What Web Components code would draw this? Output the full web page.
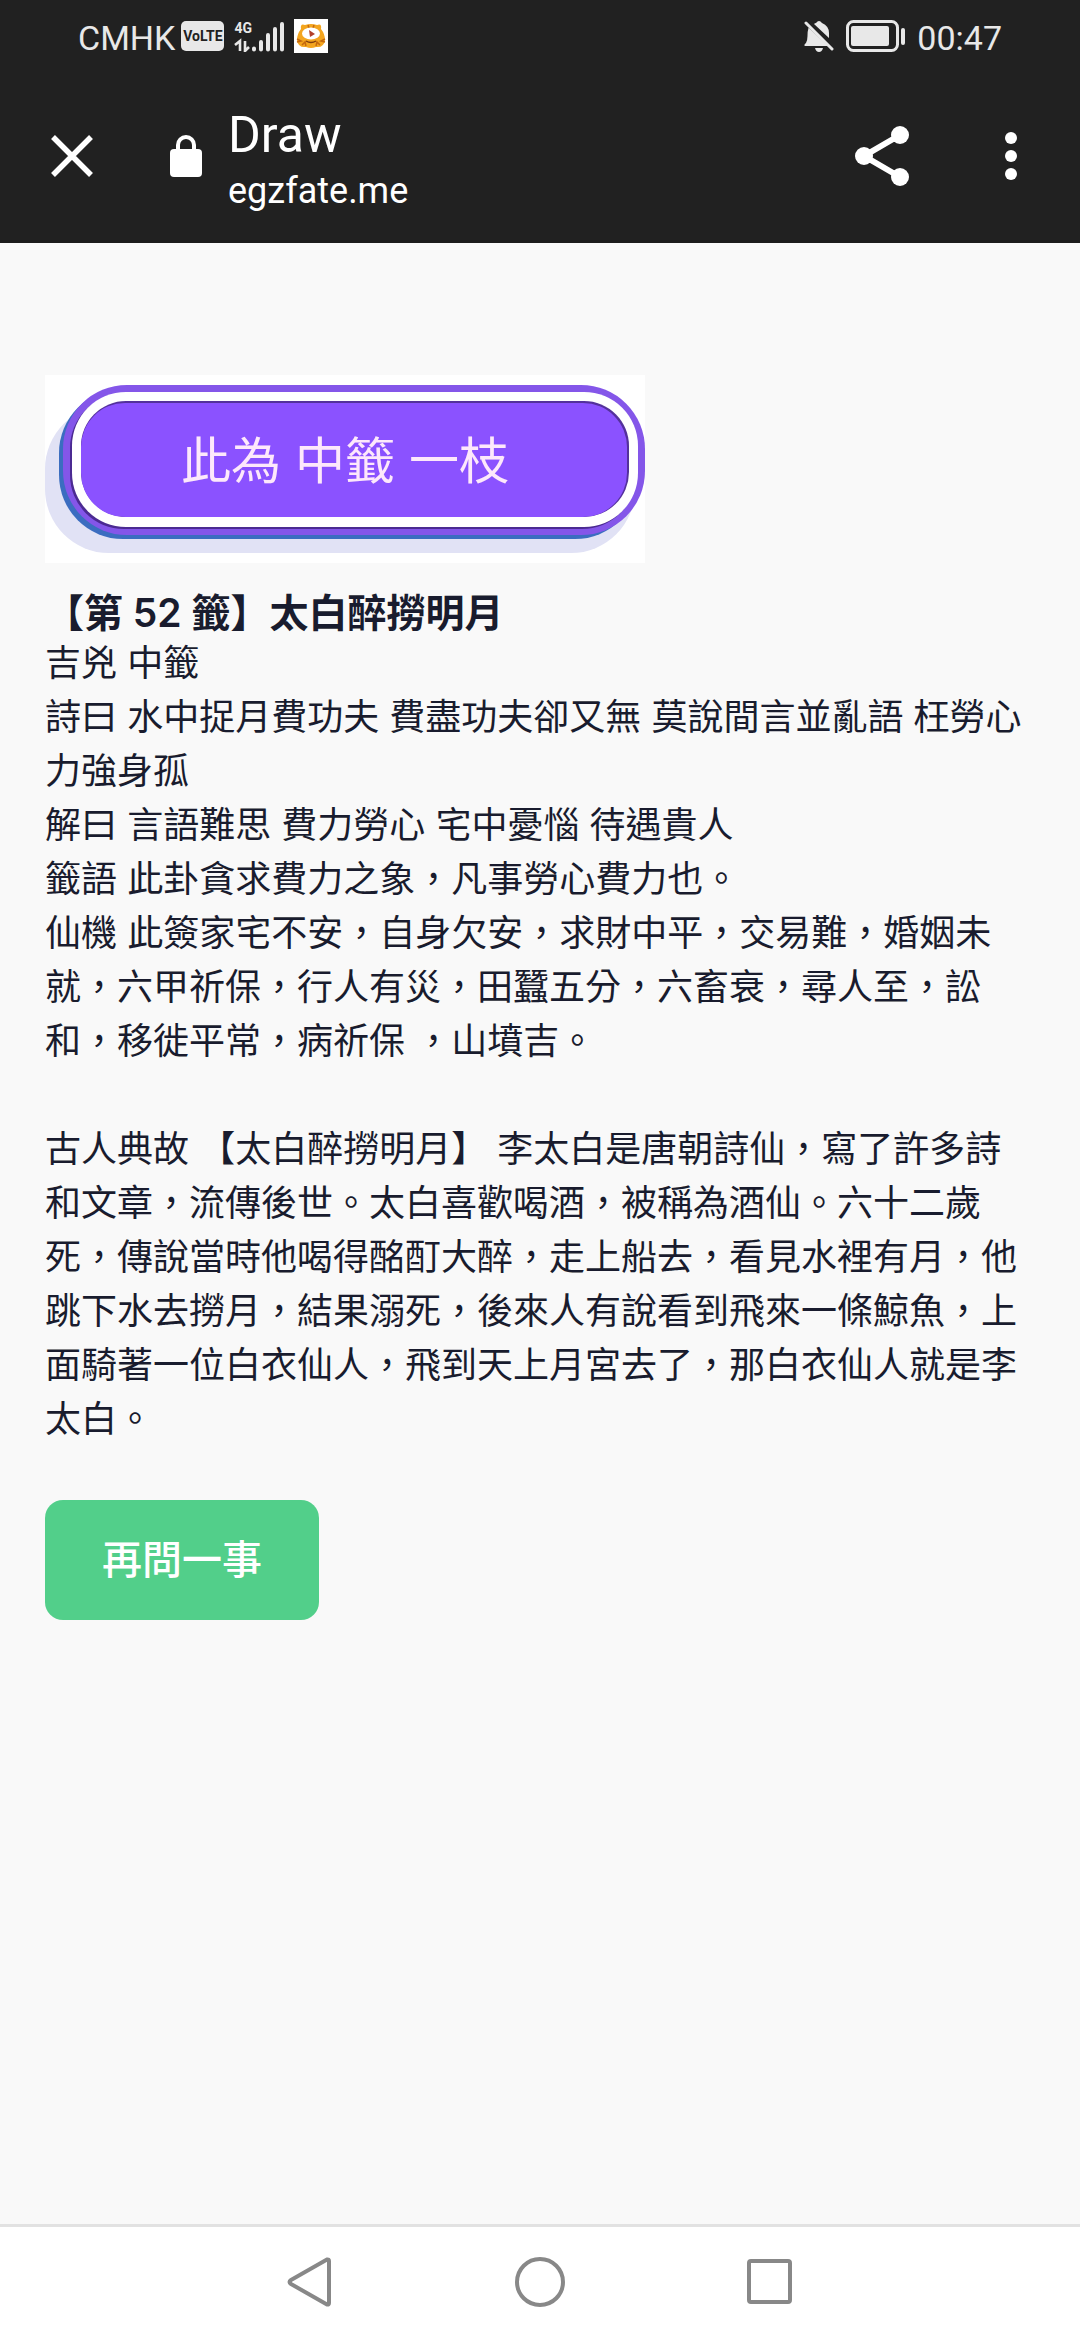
<!DOCTYPE html>
<html lang="zh-Hant">
<head>
<meta charset="utf-8">
<meta name="viewport" content="width=device-width, initial-scale=1">
<title>Draw</title>
<style>
    body {
        margin: 0;
        font-family: Inter, "Noto Sans CJK TC", sans-serif;
        color: #191c2e;
        background-color: #f9f9f9;
        --bar-color: #212121;
        --bar-font: Roboto, "Noto Sans", sans-serif;
        --page-padding: 45px;
    }
</style>
</head>
<body>
<fate-screen>
    <status-bar slot="top" carrier="CMHK" time="00:47"></status-bar>
    <browser-bar slot="top" page="Draw" host="egzfate.me"></browser-bar>

    <result-banner>此為 中籤 一枝</result-banner>
    <fortune-text>
        <span slot="title">【第 52 籤】太白醉撈明月</span>
        <p>吉兇 中籤</p>
        <p>詩曰 水中捉月費功夫 費盡功夫卻又無 莫說間言並亂語 枉勞心力強身孤</p>
        <p>解曰 言語難思 費力勞心 宅中憂惱 待遇貴人</p>
        <p>籤語 此卦貪求費力之象，凡事勞心費力也。</p>
        <p>仙機 此簽家宅不安，自身欠安，求財中平，交易難，婚姻未就，六甲祈保，行人有災，田蠶五分，六畜衰，尋人至，訟和，移徙平常，病祈保 ，山墳吉。</p>
        <p slot="story">古人典故 【太白醉撈明月】 李太白是唐朝詩仙，寫了許多詩和文章，流傳後世。太白喜歡喝酒，被稱為酒仙。六十二歲死，傳說當時他喝得酩酊大醉，走上船去，看見水裡有月，他跳下水去撈月，結果溺死，後來人有說看到飛來一條鯨魚，上面騎著一位白衣仙人，飛到天上月宮去了，那白衣仙人就是李太白。</p>
    </fortune-text>
    <action-button>再問一事</action-button>

    <nav-bar slot="bottom"></nav-bar>
</fate-screen>

<script>
function makeTemplate( html ) {
    const template = document.createElement('template');
    template.innerHTML = html;
    return template;
}

class BaseElement extends HTMLElement {
    constructor(){
        super();

        this.attachShadow( { mode:"open" } );
        this.shadowRoot.appendChild( this.constructor.template.content.cloneNode( true ) );
    }

    setText( selector, text ) {
        this.shadowRoot.querySelector( selector ).textContent = text;
    }
}

class FateScreen extends BaseElement {
    static template = makeTemplate(`
        <style>
            :host {
                display: flex;
                flex-direction: column;
                min-height: 100vh;
            }

            main {
                flex: 1;
                display: flex;
                flex-direction: column;
                align-items: flex-start;
                padding: 132px var( --page-padding ) 54px;
            }
        </style>
        <header><slot name="top"></slot></header>
        <main><slot></slot></main>
        <footer><slot name="bottom"></slot></footer>
    `);
}

class StatusBar extends BaseElement {
    static template = makeTemplate(`
        <style>
            :host {
                display: flex;
                justify-content: space-between;
                align-items: center;
                height: 72px;
                padding: 0 78px;
                color: #e8e8e8;
                background-color: var( --bar-color );
                font: 34px/40px var( --bar-font );
            }

            .group {
                display: flex;
                align-items: center;
            }

            .carrier, time {
                padding-top: 4px;
            }

            .volte {
                width: 43px;
                margin: 0 10px 0 6px;
                border-radius: 5px;
                background-color: #e8e8e8;
                color: var( --bar-color );
                font-size: 14px;
                font-weight: 700;
                line-height: 30px;
                text-align: center;
            }

            .signal {
                display: grid;
                margin-right: 10px;
            }

            .signal > * {
                grid-area: 1 / 1;
            }

            .net {
                font-size: 14px;
                font-weight: 700;
                line-height: 16px;
            }

            svg {
                display: block;
            }

            .bell {
                margin-right: 12px;
            }

            .battery {
                margin-right: 11px;
            }
        </style>
        <div class="group">
            <span class="carrier"></span>
            <span class="volte">VoLTE</span>
            <div class="signal">
                <span class="net">4G</span>
                <svg width="50" height="32" viewBox="0 0 50 32" fill="none" stroke="#e8e8e8" aria-hidden="true">
                    <path d="M1 25l5-4v10M11 21v10l4-4" stroke-width="2.6"/>
                    <path d="M20 28.500v1M27 22v7.500M34 15v14.500M41 9v20.500M48 4v25.500" stroke-width="4" stroke-linecap="round"/>
                </svg>
            </div>
            <svg width="34" height="34" viewBox="0 0 34 34" aria-hidden="true">
                <rect width="34" height="34" fill="#fff"/>
                <path d="M7 10Q6 4 11 6Q17 4 23 6Q28 4 27 10Q31 15 31 21Q30 29 22 28Q17 30 12 28Q4 29 3 21Q3 15 7 10Z" fill="#f3a51f"/>
                <path d="M3 20l4 2-4 1M31 20l-4 2 4 1M8 26l3-3 1 4M26 26l-3-3-1 4M14 6l1 3M20 6l-1 3" stroke="#c4680e" stroke-width="1.500" fill="none"/>
                <ellipse cx="17" cy="14.500" rx="9" ry="6" fill="#fff"/>
                <path d="M15 11l6 4-5 3z" fill="#b3402a"/>
                <path d="M12 22q5 3 10 0" stroke="#7d3c10" stroke-width="1.300" fill="none"/>
            </svg>
        </div>
        <div class="group">
            <svg class="bell" width="30" height="34" viewBox="0 0 30 34" fill="#e8e8e8" aria-hidden="true">
                <path d="M4.500 9Q3.500 12 3.500 17Q3.500 21 2 24Q0 25 .5 27H24L5 9Z"/>
                <path d="M10 5Q11 4 12 4Q15 0 18 4Q25 7 25 14V19Z"/>
                <path d="M11 29h8q-1 4-4 4t-4-4z"/>
                <path d="M2 4L28 30" stroke="#e8e8e8" stroke-width="3" stroke-linecap="round"/>
            </svg>
            <svg class="battery" width="60" height="34" viewBox="0 0 60 34" aria-hidden="true">
                <rect x="1.500" y="2.500" width="50" height="29" rx="6" fill="none" stroke="#e8e8e8" stroke-width="3"/>
                <rect x="5" y="7" width="38" height="20" rx="2" fill="#e8e8e8"/>
                <rect x="55" y="9" width="4" height="17" rx="2" fill="#e8e8e8"/>
            </svg>
            <time></time>
        </div>
    `);

    connectedCallback() {
        this.setText( '.carrier', this.getAttribute('carrier') );
        this.setText( 'time', this.getAttribute('time') );
    }
}

class BrowserBar extends BaseElement {
    static template = makeTemplate(`
        <style>
            :host {
                display: flex;
                align-items: center;
                height: 168px;
                border-bottom: 3px solid #1c1c1c;
                color: white;
                background-color: var( --bar-color );
                font-family: var( --bar-font );
            }

            button {
                display: grid;
                place-items: center;
                width: 120px;
                height: 120px;
                padding: 0;
                border: none;
                background-color: transparent;
            }

            .close {
                width: 144px;
            }

            .menu {
                width: 138px;
            }

            .lock {
                margin: 0 26px;
            }

            .address {
                flex: 1;
                padding-top: 14px;
            }

            .page {
                font-size: 50px;
                line-height: 56px;
            }

            .host {
                font-size: 36px;
                line-height: 56px;
            }
        </style>
        <button class="close" type="button" aria-label="Close">
            <svg width="42" height="42" viewBox="0 0 42 42" stroke="white" stroke-width="5.500"><path d="M2 2L40 40M40 2L2 40"/></svg>
        </button>
        <svg class="lock" width="32" height="44" viewBox="0 0 32 44" aria-hidden="true">
            <rect y="15" width="32" height="28" rx="4" fill="white"/>
            <path d="M8 16V11a8 8 0 0 1 16 0v5" fill="none" stroke="white" stroke-width="4"/>
        </svg>
        <div class="address">
            <div class="page"></div>
            <div class="host"></div>
        </div>
        <button type="button" aria-label="Share">
            <svg width="54" height="60" viewBox="0 0 54 60" fill="white">
                <path d="M45 9L9 30L45 51" fill="none" stroke="white" stroke-width="6"/>
                <circle cx="45" cy="9" r="9"/><circle cx="9" cy="30" r="9"/><circle cx="45" cy="51" r="9"/>
            </svg>
        </button>
        <button class="menu" type="button" aria-label="More">
            <svg width="12" height="48" viewBox="0 0 12 48" fill="white"><circle cx="6" cy="6" r="6"/><circle cx="6" cy="24" r="6"/><circle cx="6" cy="42" r="6"/></svg>
        </button>
    `);

    connectedCallback() {
        this.setText( '.page', this.getAttribute('page') );
        this.setText( '.host', this.getAttribute('host') );
    }
}

class ResultBanner extends BaseElement {
    static template = makeTemplate(`
        <style>
            :host {
                display: grid;
                max-width: 100%;
                background-color: white;
            }

            svg, .label {
                grid-area: 1 / 1;
            }

            svg {
                display: block;
                max-width: 100%;
            }

            .label {
                place-self: center;
                padding-bottom: 16px;
                color: #fde8fb;
                font-size: 50px;
                font-weight: 400;
                line-height: 60px;
            }
        </style>
        <svg width="600" height="188" viewBox="0 0 600 188" aria-hidden="true">
            <rect x="0" y="30" width="590" height="148" rx="64" fill="#e1e2f5"/>
            <rect x="14" y="14" width="580" height="150" rx="64" fill="#3b6dc0"/>
            <rect x="18" y="10" width="582" height="150" rx="64" fill="#8456e9"/>
            <rect x="25" y="19" width="566" height="135" rx="54" fill="#4b2a92"/>
            <rect x="27" y="17" width="566" height="135" rx="54" fill="#fff"/>
            <rect x="36" y="26" width="548" height="116" rx="45" fill="#54319c"/>
            <rect x="36" y="28" width="546" height="114" rx="44" fill="#8b52ff"/>
        </svg>
        <span class="label"><slot></slot></span>
    `);
}

class FortuneText extends BaseElement {
    static template = makeTemplate(`
        <style>
            :host {
                display: block;
                margin-top: 27px;
                font-size: 36px;
                line-height: 54px;
            }

            h1 {
                margin: 0;
                font-size: 39px;
                font-weight: 600;
                line-height: 46px;
            }

            ::slotted( p ) {
                margin: 0;
            }

            .story {
                margin-top: 54px;
            }
        </style>
        <h1><slot name="title"></slot></h1>
        <slot></slot>
        <div class="story"><slot name="story"></slot></div>
    `);
}

class ActionButton extends BaseElement {
    static template = makeTemplate(`
        <style>
            :host {
                display: block;
                margin-top: 54px;
            }

            button {
                padding: 30px 57px;
                border: none;
                border-radius: 18px;
                color: white;
                background-color: #52cf8a;
                font: inherit;
                font-size: 40px;
                font-weight: 500;
                line-height: 60px;
            }
        </style>
        <button type="button"><slot></slot></button>
    `);
}

class NavBar extends BaseElement {
    static template = makeTemplate(`
        <style>
            :host {
                display: flex;
                justify-content: center;
                padding-bottom: 3px;
                border-top: 3px solid #e2e2e2;
                background-color: white;
            }

            button {
                display: grid;
                place-items: center;
                width: 230px;
                height: 110px;
                padding: 0;
                border: none;
                background-color: transparent;
            }

            svg {
                fill: none;
                stroke: #888;
                stroke-width: 4px;
                stroke-linejoin: round;
            }
        </style>
        <button type="button" aria-label="Back">
            <svg width="50" height="50" viewBox="0 0 50 50"><path d="M42 2.500Q44 2 44 4V46Q44 48 42 47.500L6 27Q3 25 6 23Z"/></svg>
        </button>
        <button type="button" aria-label="Home">
            <svg width="50" height="50" viewBox="0 0 50 50"><circle cx="25" cy="25" r="23"/></svg>
        </button>
        <button type="button" aria-label="Recent apps">
            <svg width="50" height="50" viewBox="0 0 50 50"><rect x="4" y="4" width="41" height="41" rx="2"/></svg>
        </button>
    `);
}

window.customElements.define( 'fate-screen', FateScreen );
window.customElements.define( 'status-bar', StatusBar );
window.customElements.define( 'browser-bar', BrowserBar );
window.customElements.define( 'result-banner', ResultBanner );
window.customElements.define( 'fortune-text', FortuneText );
window.customElements.define( 'action-button', ActionButton );
window.customElements.define( 'nav-bar', NavBar );
</script>
</body>
</html>
